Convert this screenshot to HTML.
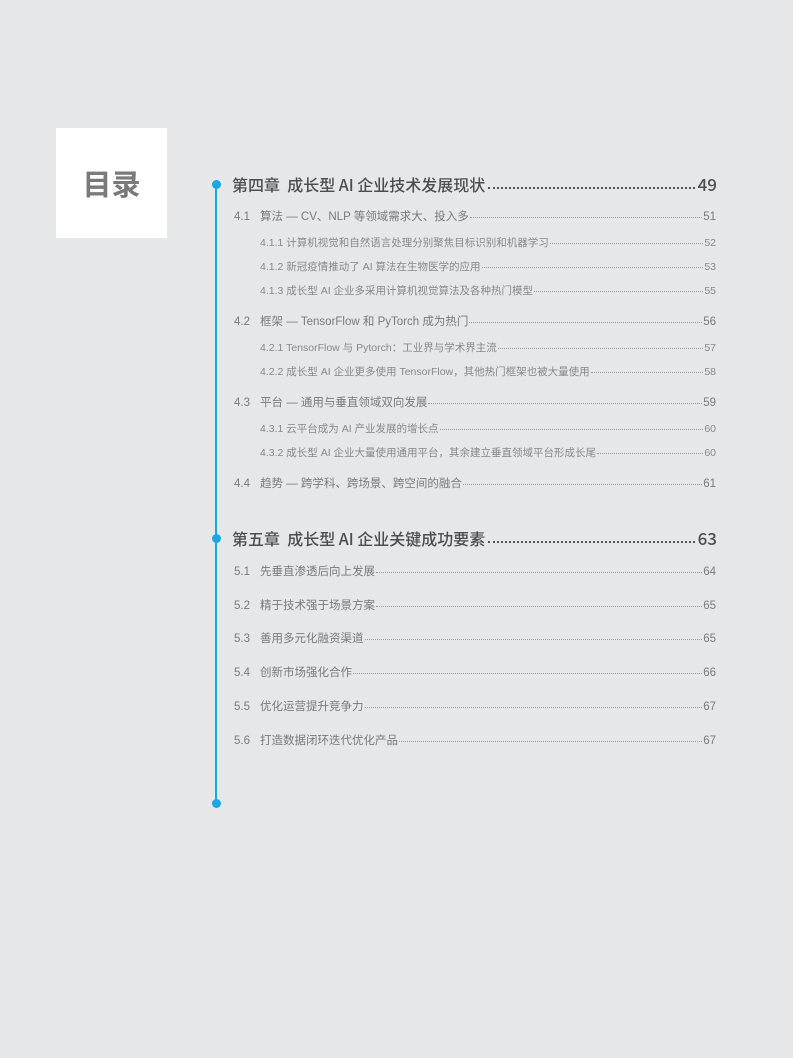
<!DOCTYPE html><html><head><meta charset="utf-8"><style>
body{margin:0;width:793px;height:1058px;background:#e6e7e9;position:relative;overflow:hidden;font-family:"Liberation Sans","Noto Sans CJK SC",sans-serif}
.box{position:absolute;left:56px;top:128px;width:111px;height:110px;background:#fff;display:flex;align-items:center;justify-content:center;font-size:29px;font-weight:bold;color:#7a7a7a;font-family:"Noto Sans CJK SC",sans-serif}
.line{position:absolute;left:215px;top:184px;width:2px;height:619px;background:#1aa5e6}
.dot{position:absolute;width:9px;height:9px;border-radius:50%;background:#1aa5e6;left:211.5px}
.r{position:absolute;display:flex;align-items:baseline;white-space:nowrap;line-height:1}
.r .d{flex:1;border-bottom:1px dotted #999;margin:0 1px;transform:translateY(-2px)}
.c{left:232px;width:485px;font-size:16px;color:#4d4d4d;font-family:"Noto Sans CJK SC",sans-serif;font-weight:500}
.c .num{font-size:17px}
.c .d{border-bottom:2px dotted #555;margin:0 3px}
.s{left:234px;width:482px;font-size:11.5px;color:#7a7a7a}
.s .n{width:26px}
.ss{left:260px;width:456px;font-size:10.5px;color:#888}
</style></head><body>
<div class="box">目录</div>
<div class="line"></div>
<div class="dot" style="top:179.5px"></div>
<div class="dot" style="top:533.5px"></div>
<div class="dot" style="top:798.5px"></div>

<div class="r c" style="top:175px"><span>第四章&nbsp; 成长型 AI 企业技术发展现状</span><span class="d"></span><span class="num">49</span></div>
<div class="r s" style="top:212px"><span class="n">4.1</span><span>算法 — CV、NLP 等领域需求大、投入多</span><span class="d"></span><span>51</span></div>
<div class="r ss" style="top:238px"><span>4.1.1 计算机视觉和自然语言处理分别聚焦目标识别和机器学习</span><span class="d"></span><span>52</span></div>
<div class="r ss" style="top:262px"><span>4.1.2 新冠疫情推动了 AI 算法在生物医学的应用</span><span class="d"></span><span>53</span></div>
<div class="r ss" style="top:286px"><span>4.1.3 成长型 AI 企业多采用计算机视觉算法及各种热门模型</span><span class="d"></span><span>55</span></div>
<div class="r s" style="top:317px"><span class="n">4.2</span><span>框架 — TensorFlow 和 PyTorch 成为热门</span><span class="d"></span><span>56</span></div>
<div class="r ss" style="top:343px"><span>4.2.1 TensorFlow 与 Pytorch：工业界与学术界主流</span><span class="d"></span><span>57</span></div>
<div class="r ss" style="top:367px"><span>4.2.2 成长型 AI 企业更多使用 TensorFlow，其他热门框架也被大量使用</span><span class="d"></span><span>58</span></div>
<div class="r s" style="top:398px"><span class="n">4.3</span><span>平台 — 通用与垂直领域双向发展</span><span class="d"></span><span>59</span></div>
<div class="r ss" style="top:424px"><span>4.3.1 云平台成为 AI 产业发展的增长点</span><span class="d"></span><span>60</span></div>
<div class="r ss" style="top:448px"><span>4.3.2 成长型 AI 企业大量使用通用平台，其余建立垂直领域平台形成长尾</span><span class="d"></span><span>60</span></div>
<div class="r s" style="top:479px"><span class="n">4.4</span><span>趋势 — 跨学科、跨场景、跨空间的融合</span><span class="d"></span><span>61</span></div>

<div class="r c" style="top:529px"><span>第五章&nbsp; 成长型 AI 企业关键成功要素</span><span class="d"></span><span class="num">63</span></div>
<div class="r s" style="top:567px"><span class="n">5.1</span><span>先垂直渗透后向上发展</span><span class="d"></span><span>64</span></div>
<div class="r s" style="top:601px"><span class="n">5.2</span><span>精于技术强于场景方案</span><span class="d"></span><span>65</span></div>
<div class="r s" style="top:634px"><span class="n">5.3</span><span>善用多元化融资渠道</span><span class="d"></span><span>65</span></div>
<div class="r s" style="top:668px"><span class="n">5.4</span><span>创新市场强化合作</span><span class="d"></span><span>66</span></div>
<div class="r s" style="top:702px"><span class="n">5.5</span><span>优化运营提升竞争力</span><span class="d"></span><span>67</span></div>
<div class="r s" style="top:736px"><span class="n">5.6</span><span>打造数据闭环迭代优化产品</span><span class="d"></span><span>67</span></div>
</body></html>
